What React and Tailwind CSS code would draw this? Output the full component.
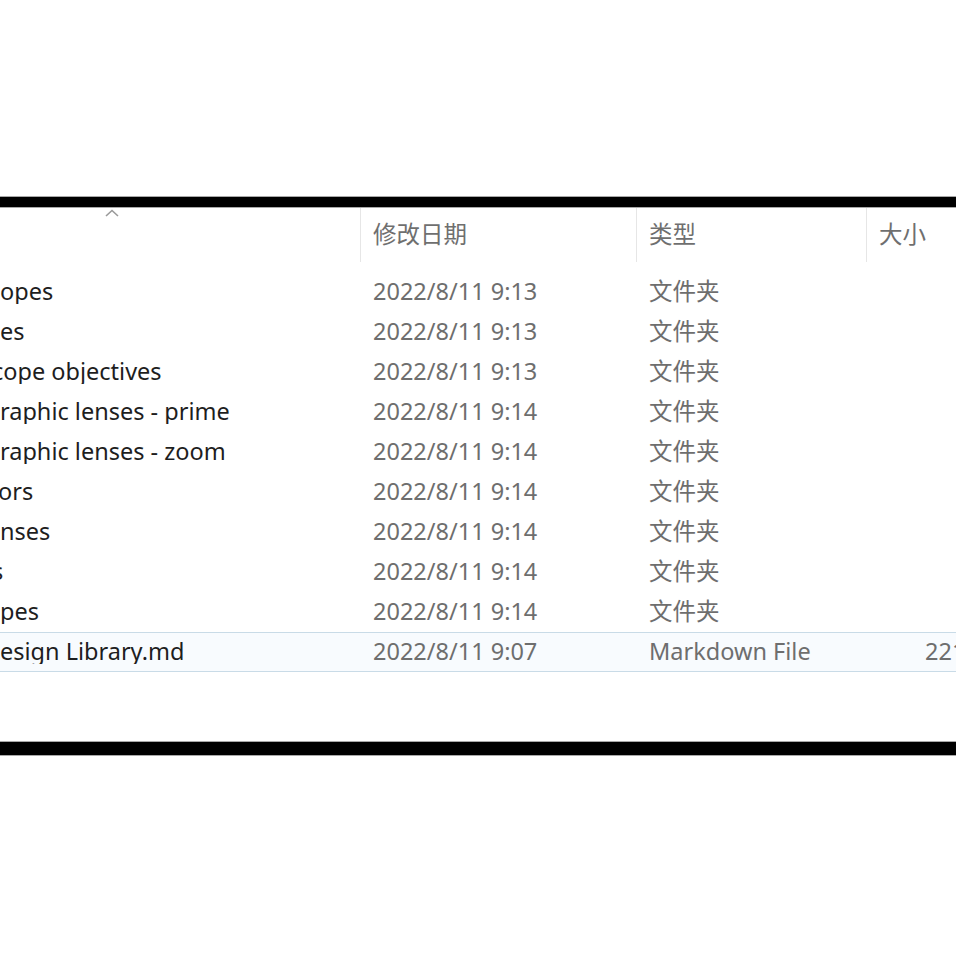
const ROWS = [
  { name: 'opes', shift: 0, date: '2022/8/11 9:13', type: '文件夹' },
  { name: 'es', shift: 0, date: '2022/8/11 9:13', type: '文件夹' },
  { name: 'cope objectives', shift: -8, date: '2022/8/11 9:13', type: '文件夹' },
  { name: 'raphic lenses - prime', shift: 0, date: '2022/8/11 9:14', type: '文件夹' },
  { name: 'raphic lenses - zoom', shift: 0, date: '2022/8/11 9:14', type: '文件夹' },
  { name: 'ors', shift: -2, date: '2022/8/11 9:14', type: '文件夹' },
  { name: 'nses', shift: 0, date: '2022/8/11 9:14', type: '文件夹' },
  { name: 's', shift: -8, date: '2022/8/11 9:14', type: '文件夹' },
  { name: 'pes', shift: 0, date: '2022/8/11 9:14', type: '文件夹' },
  { name: 'esign Library.md', shift: 0, date: '2022/8/11 9:07', type: 'Markdown File', size: '221 KB', selected: true },
]

const FONT = { fontFamily: '"Noto Sans", "Noto Sans CJK SC", sans-serif' }

function Bar({ thick }) {
  return (
    <div className={`w-full border-y border-[#a8a8a8] bg-black ${thick}`} />
  )
}

function HeaderCell({ children, w }) {
  return (
    <div className={`${w} h-full shrink-0 flex items-center border-l border-[#e6e6e6] pl-[12px] text-[#6f6f6f]`}>
      {children}
    </div>
  )
}

export default function App() {
  return (
    <div className="w-[956px] h-[956px] overflow-hidden bg-white text-[23.5px] leading-none" style={FONT}>
      <div className="h-[196px]" />
      <Bar thick="h-[12px]" />

      {/* column header */}
      <div className="flex h-[54px] w-[1000px]">
        <div className="relative w-[360px] shrink-0">
          <svg className="absolute left-[105px] top-[1px]" width="14" height="8" viewBox="0 0 14 8" fill="none">
            <path d="M1 7 L7 1.5 L13 7" stroke="#9a9a9a" strokeWidth="1.6" />
          </svg>
        </div>
        <HeaderCell w="w-[276px]">修改日期</HeaderCell>
        <HeaderCell w="w-[230px]">类型</HeaderCell>
        <HeaderCell w="w-[134px]">大小</HeaderCell>
      </div>

      {/* file rows */}
      <div className="mt-[10px] flex flex-col">
        {ROWS.map((r, i) => (
          <div
            key={i}
            className={`flex items-center h-[40px] w-[1000px] ${r.selected ? 'border-y border-[#c9dbe7] bg-[#f8fbfe]' : 'border-y border-transparent'}`}
          >
            <div className="w-[360px] shrink-0 overflow-hidden whitespace-nowrap text-[#1e1e1e]">
              <span className="inline-block" style={{ marginLeft: r.shift }}>{r.name}</span>
            </div>
            <div className="w-[276px] shrink-0 pl-[13px] text-[#6e6e6e] whitespace-nowrap">{r.date}</div>
            <div className="w-[230px] shrink-0 pl-[13px] text-[#6e6e6e] whitespace-nowrap">{r.type}</div>
            <div className="w-[134px] shrink-0 pl-[59px] text-[#6e6e6e] whitespace-nowrap">{r.size}</div>
          </div>
        ))}
      </div>

      <div className="h-[69px]" />
      <Bar thick="h-[15px]" />
    </div>
  )
}
